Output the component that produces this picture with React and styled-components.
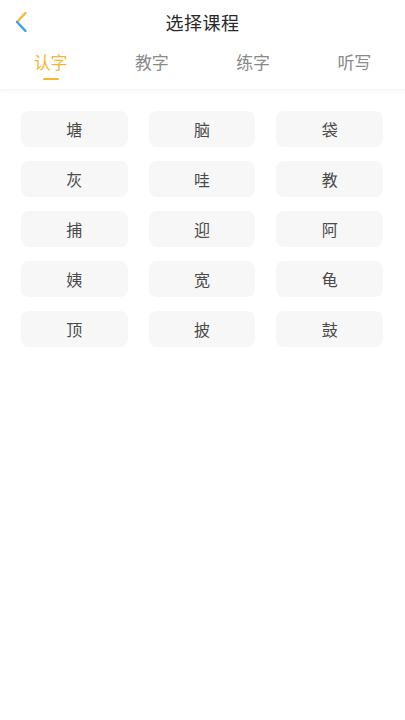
import React, { useState } from "react";
import styled, { createGlobalStyle } from "styled-components";

const GlobalStyle = createGlobalStyle`
  html, body {
    margin: 0;
    padding: 0;
    background: #fff;
    font-family: "Noto Sans CJK SC", "Noto Sans", sans-serif;
  }
  *, *::before, *::after {
    box-sizing: border-box;
  }
`;

const tabs = ["认字", "教字", "练字", "听写"];
const words = ["塘", "脑", "袋", "灰", "哇", "教", "捕", "迎", "阿", "姨", "宽", "龟", "顶", "披", "鼓"];

const App = () => {
  const [active, setActive] = useState(0);

  return (
    <Page>
      <GlobalStyle />
      <Header>
        <Back aria-label="返回">
          <svg width="14" height="22" viewBox="0 0 14 22" fill="none">
            <path d="M11.5 2 L3 11" stroke="#f5b83a" strokeWidth="2.4" strokeLinecap="round" />
            <path d="M3 11 L11.5 20" stroke="#3d9be9" strokeWidth="2.4" strokeLinecap="round" />
          </svg>
        </Back>
        <Title>选择课程</Title>
      </Header>
      <TabBar>
        {tabs.map((t, i) => (
          <Tab key={t} $active={i === active} onClick={() => setActive(i)}>
            {t}
          </Tab>
        ))}
      </TabBar>
      <Grid>
        {words.map((w) => (
          <Cell key={w}>{w}</Cell>
        ))}
      </Grid>
    </Page>
  );
};

const Page = styled.div`
  width: 405px;
  min-height: 720px;
  background: #fff;
`;

const Header = styled.div`
  position: relative;
  height: 44px;
  display: flex;
  align-items: center;
  justify-content: center;
`;

const Back = styled.button`
  position: absolute;
  left: 14px;
  top: 11px;
  border: none;
  background: none;
  padding: 0;
  display: flex;
  cursor: pointer;
`;

const Title = styled.h1`
  margin: 0;
  font-size: 18px;
  font-weight: 400;
  color: #2a2a2a;
  letter-spacing: 0.5px;
`;

const TabBar = styled.div`
  display: flex;
  height: 46px;
  box-shadow: 0 2px 3px rgba(0, 0, 0, 0.03);
  border-bottom: 1px solid #f6f6f6;
`;

const Tab = styled.div`
  flex: 1;
  position: relative;
  display: flex;
  justify-content: center;
  padding-top: 8px;
  line-height: 20px;
  font-size: 17px;
  color: ${({ $active }) => ($active ? "#f5b731" : "#8a8a8a")};
  cursor: pointer;
  &::after {
    content: "";
    display: ${({ $active }) => ($active ? "block" : "none")};
    position: absolute;
    top: 34px;
    left: 50%;
    width: 16px;
    height: 2px;
    margin-left: -8px;
    border-radius: 1px;
    background: #f5b731;
  }
`;

const Grid = styled.div`
  display: grid;
  grid-template-columns: repeat(3, 1fr);
  column-gap: 21px;
  row-gap: 14px;
  padding: 21px 22px 0 21px;
`;

const Cell = styled.div`
  height: 36px;
  border-radius: 8px;
  background: #f7f7f7;
  display: flex;
  align-items: center;
  justify-content: center;
  font-size: 16px;
  color: #4a4a4a;
`;

export default App;
